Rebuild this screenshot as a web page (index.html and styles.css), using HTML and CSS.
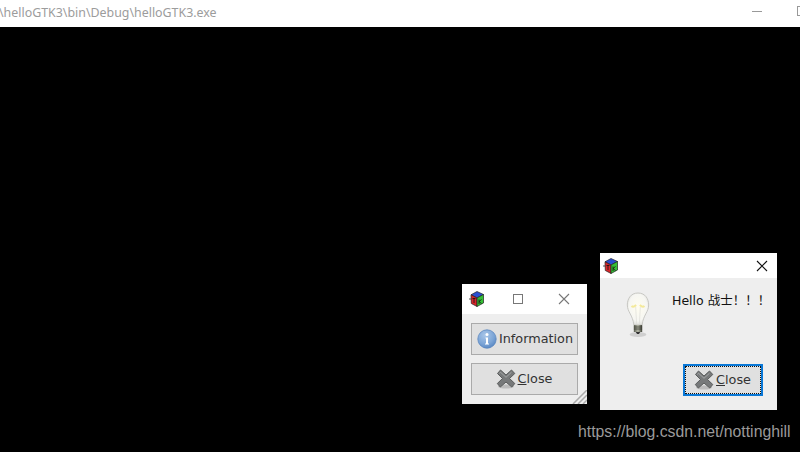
FILE: index.html
```html
<!DOCTYPE html>
<html lang="en">
<head>
<meta charset="utf-8">
<title>helloGTK3</title>
<link rel="stylesheet" href="styles.css">
</head>
<body>
<svg class="defs" width="0" height="0" aria-hidden="true">
  <defs>
    <symbol id="gtk" viewBox="0 0 16 16">
      <path d="M0 8H3" stroke="#555" stroke-width="1"/>
      <path d="M8 .5L14.500 3.500L8 7L2 3.800Z" fill="#2a4fd0" stroke="#222" stroke-width=".7"/>
      <path d="M2 3.800L8 7V15.500L2.300 12.500Z" fill="#d8262a" stroke="#222" stroke-width=".7"/>
      <path d="M14.500 3.500L8 7V15.500L14.500 12Z" fill="#35c035" stroke="#222" stroke-width=".7"/>
      <path d="M3.500 7.500H6.500M5 7.500V12M10 8.500V13M10 10.500L12.500 8.500M10 10.500L12.500 12.500" stroke="#111" stroke-width=".8" fill="none"/>
    </symbol>
    <symbol id="xicon" viewBox="0 0 22 20">
      <ellipse cx="11" cy="17.500" rx="8" ry="2" fill="#bbb"/>
      <path d="M2.500 4.500L5.500 1L11 6L16.500 1L19.800 4.500L14.500 9.500L19.800 14.500L16.800 18L11 13L5.300 18L2.300 14.500L7.500 9.500Z" fill="#77797a" stroke="#5a5c5c" stroke-width="1" stroke-linejoin="round"/>
      <path d="M4.500 4.500L5.500 3.200L11 8.300L16.500 3.200" stroke="#a4a6a6" stroke-width="1" fill="none"/>
    </symbol>
    <radialGradient id="infoGrad" cx=".4" cy=".3" r=".8">
      <stop offset="0" stop-color="#a9c6e8"/>
      <stop offset=".6" stop-color="#7ba4d6"/>
      <stop offset="1" stop-color="#4f7fbd"/>
    </radialGradient>
    <radialGradient id="bulbGrad" cx=".5" cy=".45" r=".6">
      <stop offset="0" stop-color="#fffdf0"/>
      <stop offset=".7" stop-color="#f6f6f2"/>
      <stop offset="1" stop-color="#d8d8d4"/>
    </radialGradient>
    <linearGradient id="baseGrad" x1="0" y1="0" x2="1" y2="0">
      <stop offset="0" stop-color="#5a5d50"/>
      <stop offset=".5" stop-color="#b5b8a8"/>
      <stop offset="1" stop-color="#3c3e34"/>
    </linearGradient>
  </defs>
</svg>

<header class="titlebar">
  <span class="title">\helloGTK3\bin\Debug\helloGTK3.exe</span>
  <span class="min-btn"></span>
  <span class="max-btn"></span>
</header>

<main class="console">
  <section class="window win-main">
    <div class="win-head head-main">
      <svg class="app-icon" width="16" height="16"><use href="#gtk"/></svg>
      <span class="square-btn"></span>
      <svg class="close-glyph light" width="12" height="12" viewBox="0 0 12 12"><path d="M1 1L11 11M11 1L1 11"/></svg>
    </div>
    <div class="win-body body-main">
      <button class="gtk-btn">
        <svg class="info-icon" width="20" height="20" viewBox="0 0 20 20">
          <circle cx="10" cy="10" r="9.200" fill="url(#infoGrad)" stroke="#5c88c0" stroke-width=".8"/>
          <circle cx="10" cy="5.500" r="1.500" fill="#fff"/>
          <path d="M8.500 8.500H11V14.500H12V15.500H8V14.500H9V9.500H8.500Z" fill="#fff"/>
        </svg>
        <span>Information</span>
      </button>
      <button class="gtk-btn">
        <svg class="x-icon" width="22" height="20"><use href="#xicon"/></svg>
        <span><u>C</u>lose</span>
      </button>
    </div>
    <svg class="grip" width="16" height="14" viewBox="0 0 16 14"><path d="M2 14L16 0M7 14L16 5M12 14L16 10"/></svg>
  </section>

  <section class="window win-dialog">
    <div class="win-head head-dialog">
      <svg class="app-icon" width="16" height="16"><use href="#gtk"/></svg>
      <svg class="close-glyph" width="12" height="12" viewBox="0 0 12 12"><path d="M1 1L11 11M11 1L1 11"/></svg>
    </div>
    <div class="win-body body-dialog">
      <div class="message">
        <svg class="bulb" width="26" height="46" viewBox="0 0 28 46" preserveAspectRatio="none">
          <ellipse cx="14" cy="42.500" rx="9" ry="2.500" fill="#cfcfcf"/>
          <path d="M14 1C6 1 2.500 7 2.500 13C2.500 20 8.500 23 9.500 33H18.500C19.500 23 25.500 20 25.500 13C25.500 7 22 1 14 1Z" fill="url(#bulbGrad)" stroke="#c6c6c2" stroke-width="1"/>
          <path d="M7 14C9 16 11 14 12 13M21 14C19 16 17 14 16 13" stroke="#f3e99a" stroke-width="2" fill="none"/>
          <path d="M11.500 15L12.500 32M16.500 15L15.500 32" stroke="#dcdcd6" stroke-width=".7" fill="none"/>
          <rect x="9.500" y="33" width="9" height="7" fill="url(#baseGrad)"/>
          <path d="M9.500 35H18.500M9.500 37H18.500" stroke="#2f3029" stroke-width=".7"/>
          <path d="M11.500 40H16.500L15 42H13Z" fill="#333"/>
        </svg>
        <span class="msg-text">Hello 战士！！！</span>
      </div>
      <div class="actions">
        <button class="gtk-btn focused">
          <svg class="x-icon" width="22" height="20"><use href="#xicon"/></svg>
          <span><u>C</u>lose</span>
        </button>
      </div>
    </div>
  </section>

  <span class="watermark">https://blog.csdn.net/nottinghill</span>
</main>
</body>
</html>
```

FILE: styles.css
```css
* {
  box-sizing: border-box;
}

html,
body {
  margin: 0;
  height: 100%;
  overflow: hidden;
}

body {
  display: flex;
  flex-direction: column;
  width: 800px;
  height: 452px;
  background: #000;
}

.defs {
  position: absolute;
}

.titlebar {
  flex: none;
  position: relative;
  display: flex;
  align-items: center;
  height: 27px;
  background: #fff;
  overflow: hidden;
}

.title {
  margin-left: -1px;
  margin-top: -2px;
  font: 12.400px "Noto Sans", sans-serif;
  color: #9c9c9c;
  white-space: nowrap;
}

.min-btn {
  position: absolute;
  left: 752px;
  top: 11px;
  width: 10px;
  height: 1px;
  background: #999;
}

.max-btn {
  position: absolute;
  left: 797px;
  top: 6px;
  width: 10px;
  height: 10px;
  border: 1px solid #999;
}

.console {
  flex: 1;
  position: relative;
  background: #000;
}

.window {
  position: absolute;
  display: flex;
  flex-direction: column;
  background: #eeeeee;
}

.win-main {
  left: 462px;
  top: 257px;
  width: 125px;
  height: 120px;
}

.win-dialog {
  left: 600px;
  top: 226px;
  width: 177px;
  height: 157px;
}

.win-head {
  flex: none;
  display: flex;
  align-items: center;
  background: #fff;
}

.head-main {
  height: 30px;
  padding-left: 7px;
}

.head-dialog {
  height: 25px;
  padding-left: 3px;
  justify-content: space-between;
  padding-right: 9px;
}

.app-icon {
  flex: none;
}

.square-btn {
  width: 10px;
  height: 10px;
  margin-left: 28px;
  border: 1px solid #777;
}

.close-glyph {
  fill: none;
  stroke: #111;
  stroke-width: 1.100;
}

.close-glyph.light {
  margin-left: 35px;
  stroke: #777;
}

.win-body {
  flex: 1;
  display: flex;
  flex-direction: column;
}

.body-main {
  gap: 8px;
  padding: 9px 9px 0;
}

.body-dialog {
  padding: 14px 11px 0 25px;
}

.gtk-btn {
  display: flex;
  align-items: center;
  justify-content: center;
  gap: 1px;
  height: 32px;
  padding: 0;
  border: 1px solid #aaaaaa;
  background: #e0e0e0;
  font: 12.800px "DejaVu Sans", sans-serif;
  color: #333;
}

.gtk-btn span {
  margin-top: -2px;
}

.info-icon {
  margin-left: 1px;
  margin-right: 1px;
}

.x-icon {
  margin-left: -2px;
}

.grip {
  position: absolute;
  right: 0;
  bottom: 0;
  fill: none;
  stroke: #aaa;
  stroke-width: 1.500;
}

.message {
  display: flex;
  align-items: flex-start;
  height: 72px;
}

.bulb {
  flex: none;
}

.msg-text {
  margin-left: 21px;
  margin-top: -2px;
  font: 12.500px "DejaVu Sans", "Noto Sans CJK SC", sans-serif;
  color: #111;
  white-space: nowrap;
}

.actions {
  display: flex;
  justify-content: flex-end;
  margin-right: 3px;
}

.gtk-btn.focused {
  width: 80px;
  border: 2px solid #0a78d7;
  outline: 1px dotted #111;
  outline-offset: -3px;
}

.watermark {
  position: absolute;
  left: 578px;
  top: 396px;
  font: 15.800px "Liberation Sans", sans-serif;
  color: #9a9a9a;
  white-space: nowrap;
}
```
